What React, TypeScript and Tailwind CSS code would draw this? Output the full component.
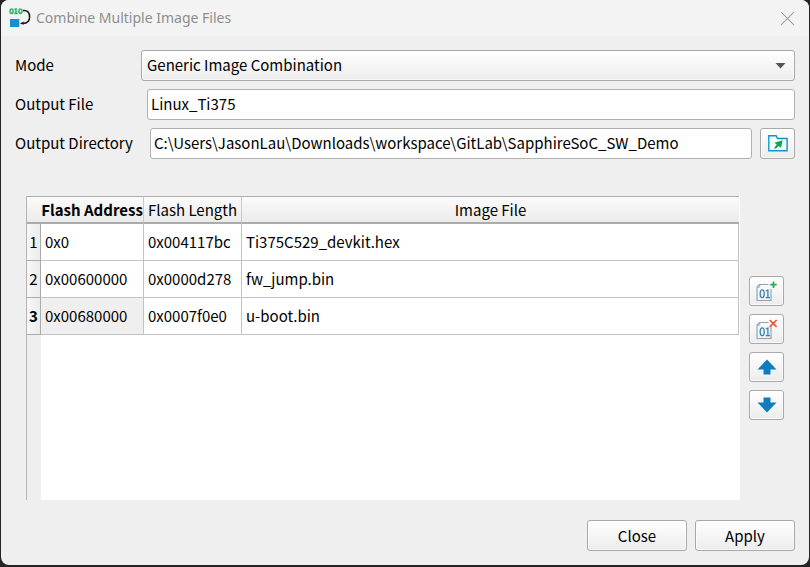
import React, { useState } from "react";
import { X } from "lucide-react";

const face =
  "rounded-[3px] border border-[#a9a9a9] bg-linear-to-b from-white to-[#ececec] shadow-[inset_0_0_0_1px_rgba(255,255,255,0.6)]";
const field =
  "h-[31px] min-w-0 flex-1 rounded-[3px] border border-[#b0b0b0] bg-white px-[3px] pb-[3px] outline-none";

const files = [
  { address: "0x0", length: "0x004117bc", file: "Ti375C529_devkit.hex" },
  { address: "0x00600000", length: "0x0000d278", file: "fw_jump.bin" },
  { address: "0x00680000", length: "0x0007f0e0", file: "u-boot.bin" },
];

function AppIcon() {
  return (
    <svg width="23" height="20" viewBox="0 0 23 20" fill="none" aria-hidden="true">
      <g stroke="#35b46c" strokeWidth="1.6">
        <ellipse cx="2.6" cy="3.2" rx="1.5" ry="2.2" />
        <path d="M5.4 1.6 7 1V5.6M5.2 5.4h3.6" />
        <ellipse cx="11.4" cy="3.2" rx="1.5" ry="2.2" />
      </g>
      <path d="M14 2.6C18.5 2 20.6 4.6 20.6 9S18.5 15.4 14 15.4" stroke="#1c1c1c" strokeWidth="1.6" />
      <path d="M11 15.4 14.5 13.6v3.2Z" fill="#1c1c1c" />
      <path d="M1 11h9.300V19H1z" fill="#0b93d3" />
    </svg>
  );
}

function FolderIcon() {
  return (
    <svg width="20" height="17" viewBox="0 0 20 17" aria-hidden="true">
      <path d="M.8 15.7V.8h7.4l1.2 2.7h9.7v12.2Z" fill="#f6fbfe" stroke="#1292d4" strokeWidth="1.4" />
      <path d="M14.6 5.2 13 13l-2.2-2L8 13.4H5.8l3-4L6.4 7.7Z" fill="#0ca750" />
    </svg>
  );
}

function ImageIcon({ remove = false }: { remove?: boolean }) {
  return (
    <svg width="22" height="20" viewBox="0 0 22 20" fill="none" aria-hidden="true">
      <path d="M12.5 3.5H3.5L1 6v13.500h14V8" stroke="#8ba3b5" strokeWidth="1.1" />
      <path d="M1 6.2h2.7V3.5" stroke="#8ba3b5" strokeWidth="0.8" />
      <ellipse cx="6.2" cy="12.8" rx="2" ry="3.9" stroke="#3582b5" strokeWidth="1.3" />
      <path d="m9.8 10 2.1-1v7.7M9.7 16.7h4.400" stroke="#3582b5" strokeWidth="1.3" />
      {remove ? (
        <path d="m13.800 1 6.800 6.800m0-6.800-6.800 6.800" stroke="#ed5530" strokeWidth="1.7" />
      ) : (
        <path d="M17.5 .5v6.400m-3.200-3.200h6.400" stroke="#1dab5d" strokeWidth="1.7" />
      )}
    </svg>
  );
}

function ArrowIcon({ down = false }: { down?: boolean }) {
  return (
    <svg width="20" height="16" viewBox="0 0 20 16" fill="#107cc0" aria-hidden="true">
      <path d={down ? "M6.5 .5h7v5h6L10 15.5.5 5.5h6Z" : "M6.5 15.5h7v-5h6L10 .5.5 10.5h6Z"} />
    </svg>
  );
}

function ToolButton({ label, children }: { label: string; children: React.ReactNode }) {
  return (
    <button type="button" aria-label={label} className={`flex h-[30px] w-[35px] items-center justify-center ${face}`}>
      {children}
    </button>
  );
}

export default function App() {
  const [output, setOutput] = useState("Linux_Ti375");
  const [directory, setDirectory] = useState(
    "C:\\Users\\JasonLau\\Downloads\\workspace\\GitLab\\SapphireSoC_SW_Demo",
  );
  const head = "border-t border-b-2 border-[#ababab] bg-linear-to-b from-[#fbfbfb] to-[#ebebeb] p-0";
  const cell = "border-r border-b border-[#c3c3c3] px-1 py-0";

  return (
    <div className="flex min-h-screen bg-[#242424] px-px pb-[2px] font-['Noto_Sans_CJK_SC',sans-serif] text-[15px] leading-5 text-black">
      <main className="flex min-w-0 flex-1 flex-col overflow-hidden rounded-lg bg-[#efefef]">
        <header className="flex h-9 items-center gap-1 bg-[#f3f3f3] pr-[9px] pl-2 text-[#8e8e8e]">
          <AppIcon />
          <h1 className="flex-1 font-['Noto_Sans',sans-serif] text-[14px]">Combine Multiple Image Files</h1>
          <button type="button" aria-label="Close window">
            <X size={25} strokeWidth={1} />
          </button>
        </header>

        <form className="flex flex-1 flex-col px-[14px] pt-[14px] pb-[14px]">
          <div className="flex flex-col gap-2">
            <div className="flex items-center">
              <label htmlFor="mode" className="w-[126px] pb-0.5">Mode</label>
              <div className="relative min-w-0 flex-1">
                <select id="mode" className={`block h-[31px] w-full appearance-none px-[5px] pb-0.5 outline-none ${face}`}>
                  <option>Generic Image Combination</option>
                </select>
                <svg className="pointer-events-none absolute top-[13px] right-[9px]" width="11" height="6" fill="#555" aria-hidden="true">
                  <path d="M.5 0h10l-5 5.5Z" />
                </svg>
              </div>
            </div>
            <div className="flex items-center">
              <label htmlFor="output" className="w-[132px] pb-0.5">Output File</label>
              <input id="output" className={field} value={output} onChange={(e) => setOutput(e.target.value)} />
            </div>
            <div className="flex items-center">
              <label htmlFor="directory" className="w-[135px] pb-0.5">Output Directory</label>
              <input id="directory" className={field} value={directory} onChange={(e) => setDirectory(e.target.value)} />
              <button type="button" aria-label="Browse" className={`ml-2 flex h-[31px] w-[35px] items-center justify-center ${face}`}>
                <FolderIcon />
              </button>
            </div>
          </div>

          <section className="mt-[37px] flex flex-1 items-center gap-[9px] px-[11px]">
            <div className="flex flex-1 self-stretch border-l border-[#b5b5b5] bg-linear-to-r from-[#efefef] from-[14px] to-white to-[14px] pr-px">
              <table className="w-full table-fixed border-separate border-spacing-0 self-start">
                <colgroup>
                  <col className="w-[14px]" />
                  <col className="w-[103px]" />
                  <col className="w-[98px]" />
                  <col />
                </colgroup>
                <thead>
                  <tr className="h-[28px]">
                    <td className={head} />
                    <th className={`border-r border-r-[#c9c9c9] whitespace-nowrap ${head}`}>Flash Address</th>
                    <th className={`border-r border-r-[#c9c9c9] font-normal whitespace-nowrap ${head}`}>Flash Length</th>
                    <th className={`font-normal ${head}`}>Image File</th>
                  </tr>
                </thead>
                <tbody>
                  {files.map((row, i) => (
                    <tr key={row.address} className="h-[37px]">
                      <th
                        className={`border-r border-b border-[#ababab] bg-linear-to-r from-[#f7f7f7] to-[#ececec] p-0 ${i === 2 ? "font-bold" : "font-normal"}`}
                      >
                        {i + 1}
                      </th>
                      <td className={`${cell} ${i === 2 ? "bg-[#efefef]" : "bg-white"}`}>{row.address}</td>
                      <td className={cell}>{row.length}</td>
                      <td className={cell}>{row.file}</td>
                    </tr>
                  ))}
                </tbody>
              </table>
            </div>
            <div className="flex flex-col gap-2">
              <ToolButton label="Add image"><ImageIcon /></ToolButton>
              <ToolButton label="Remove image"><ImageIcon remove /></ToolButton>
              <ToolButton label="Move up"><ArrowIcon /></ToolButton>
              <ToolButton label="Move down"><ArrowIcon down /></ToolButton>
            </div>
          </section>

          <footer className="mt-5 flex justify-end gap-2">
            <button type="button" className={`h-[31px] w-[100px] ${face}`}>Close</button>
            <button type="button" className={`h-[31px] w-[100px] ${face}`}>Apply</button>
          </footer>
        </form>
      </main>
    </div>
  );
}
